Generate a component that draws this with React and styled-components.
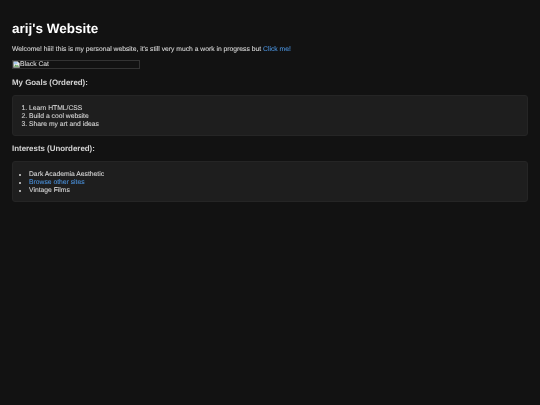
import React from "react";
import styled, { createGlobalStyle } from "styled-components";

const goals = ["Learn HTML/CSS", "Build a cool website", "Share my art and ideas"];

const BrokenImage = () => (
  <svg width="7" height="7" viewBox="0 0 16 16">
    <path d="M1 1h10l4 4v10H1z" fill="#e8e8e8" stroke="#9a9a9a" />
    <path d="M2 13l4-5 3 3 2-2 3 4z" fill="#5f9e58" />
    <path d="M2 2h8v5H2z" fill="#a8c8ee" />
  </svg>
);

const App = () => {
  return (
    <>
      <GlobalStyle />
      <Page>
        <Title>arij's Website</Title>
        <Intro>
          Welcome! hiii! this is my personal website, it's still very much a work in progress but{" "}
          <Link>Click me!</Link>
        </Intro>
        <ImageBox>
          <BrokenImage />
          <span>Black Cat</span>
        </ImageBox>
        <Heading>My Goals (Ordered):</Heading>
        <Card>
          <Ordered>
            {goals.map((goal) => (
              <li key={goal}>{goal}</li>
            ))}
          </Ordered>
        </Card>
        <Heading>Interests (Unordered):</Heading>
        <Card>
          <Unordered>
            <li>Dark Academia Aesthetic</li>
            <li>
              <Link>Browse other sites</Link>
            </li>
            <li>Vintage Films</li>
          </Unordered>
        </Card>
      </Page>
    </>
  );
};

export default App;

const GlobalStyle = createGlobalStyle`
  html, body {
    margin: 0;
    background: #121212;
  }
`;

const Page = styled.div`
  min-height: 405px;
  box-sizing: border-box;
  padding: 21px 12px 0;
  background: #121212;
  color: #d8d8d8;
  font-family: "Liberation Sans", Arial, sans-serif;
  font-size: 6.75px;
  line-height: 8px;
  text-rendering: geometricPrecision;
  -webkit-text-stroke: 0.08px currentColor;
  filter: blur(0.3px);
`;

const Title = styled.h1`
  margin: 0 0 8px;
  color: #ffffff;
  font-size: 13.5px;
  line-height: 16px;
  font-weight: 700;
  -webkit-text-stroke: 0;
`;

const Intro = styled.p`
  margin: 0 0 6px;
  line-height: 9px;
`;

const Link = styled.a`
  color: #4a90d9;
`;

const ImageBox = styled.div`
  display: flex;
  align-items: center;
  width: 128px;
  height: 9px;
  box-sizing: border-box;
  border: 1px solid #333333;
  margin-bottom: 9px;
  overflow: hidden;
  white-space: nowrap;
`;

const Heading = styled.h2`
  margin: 0 0 7px;
  color: #d4d4d4;
  font-size: 7.9px;
  line-height: 10px;
  font-weight: 700;
  -webkit-text-stroke: 0;
`;

const Card = styled.div`
  box-sizing: border-box;
  height: 41px;
  margin-bottom: 8px;
  padding: 9px 0 0;
  background: #1e1e1e;
  border: 1px solid #252525;
  border-radius: 3px;
`;

const Ordered = styled.ol`
  margin: 0;
  padding-left: 16px;
`;

const Unordered = styled.ul`
  margin: 0;
  padding-left: 16px;
`;
